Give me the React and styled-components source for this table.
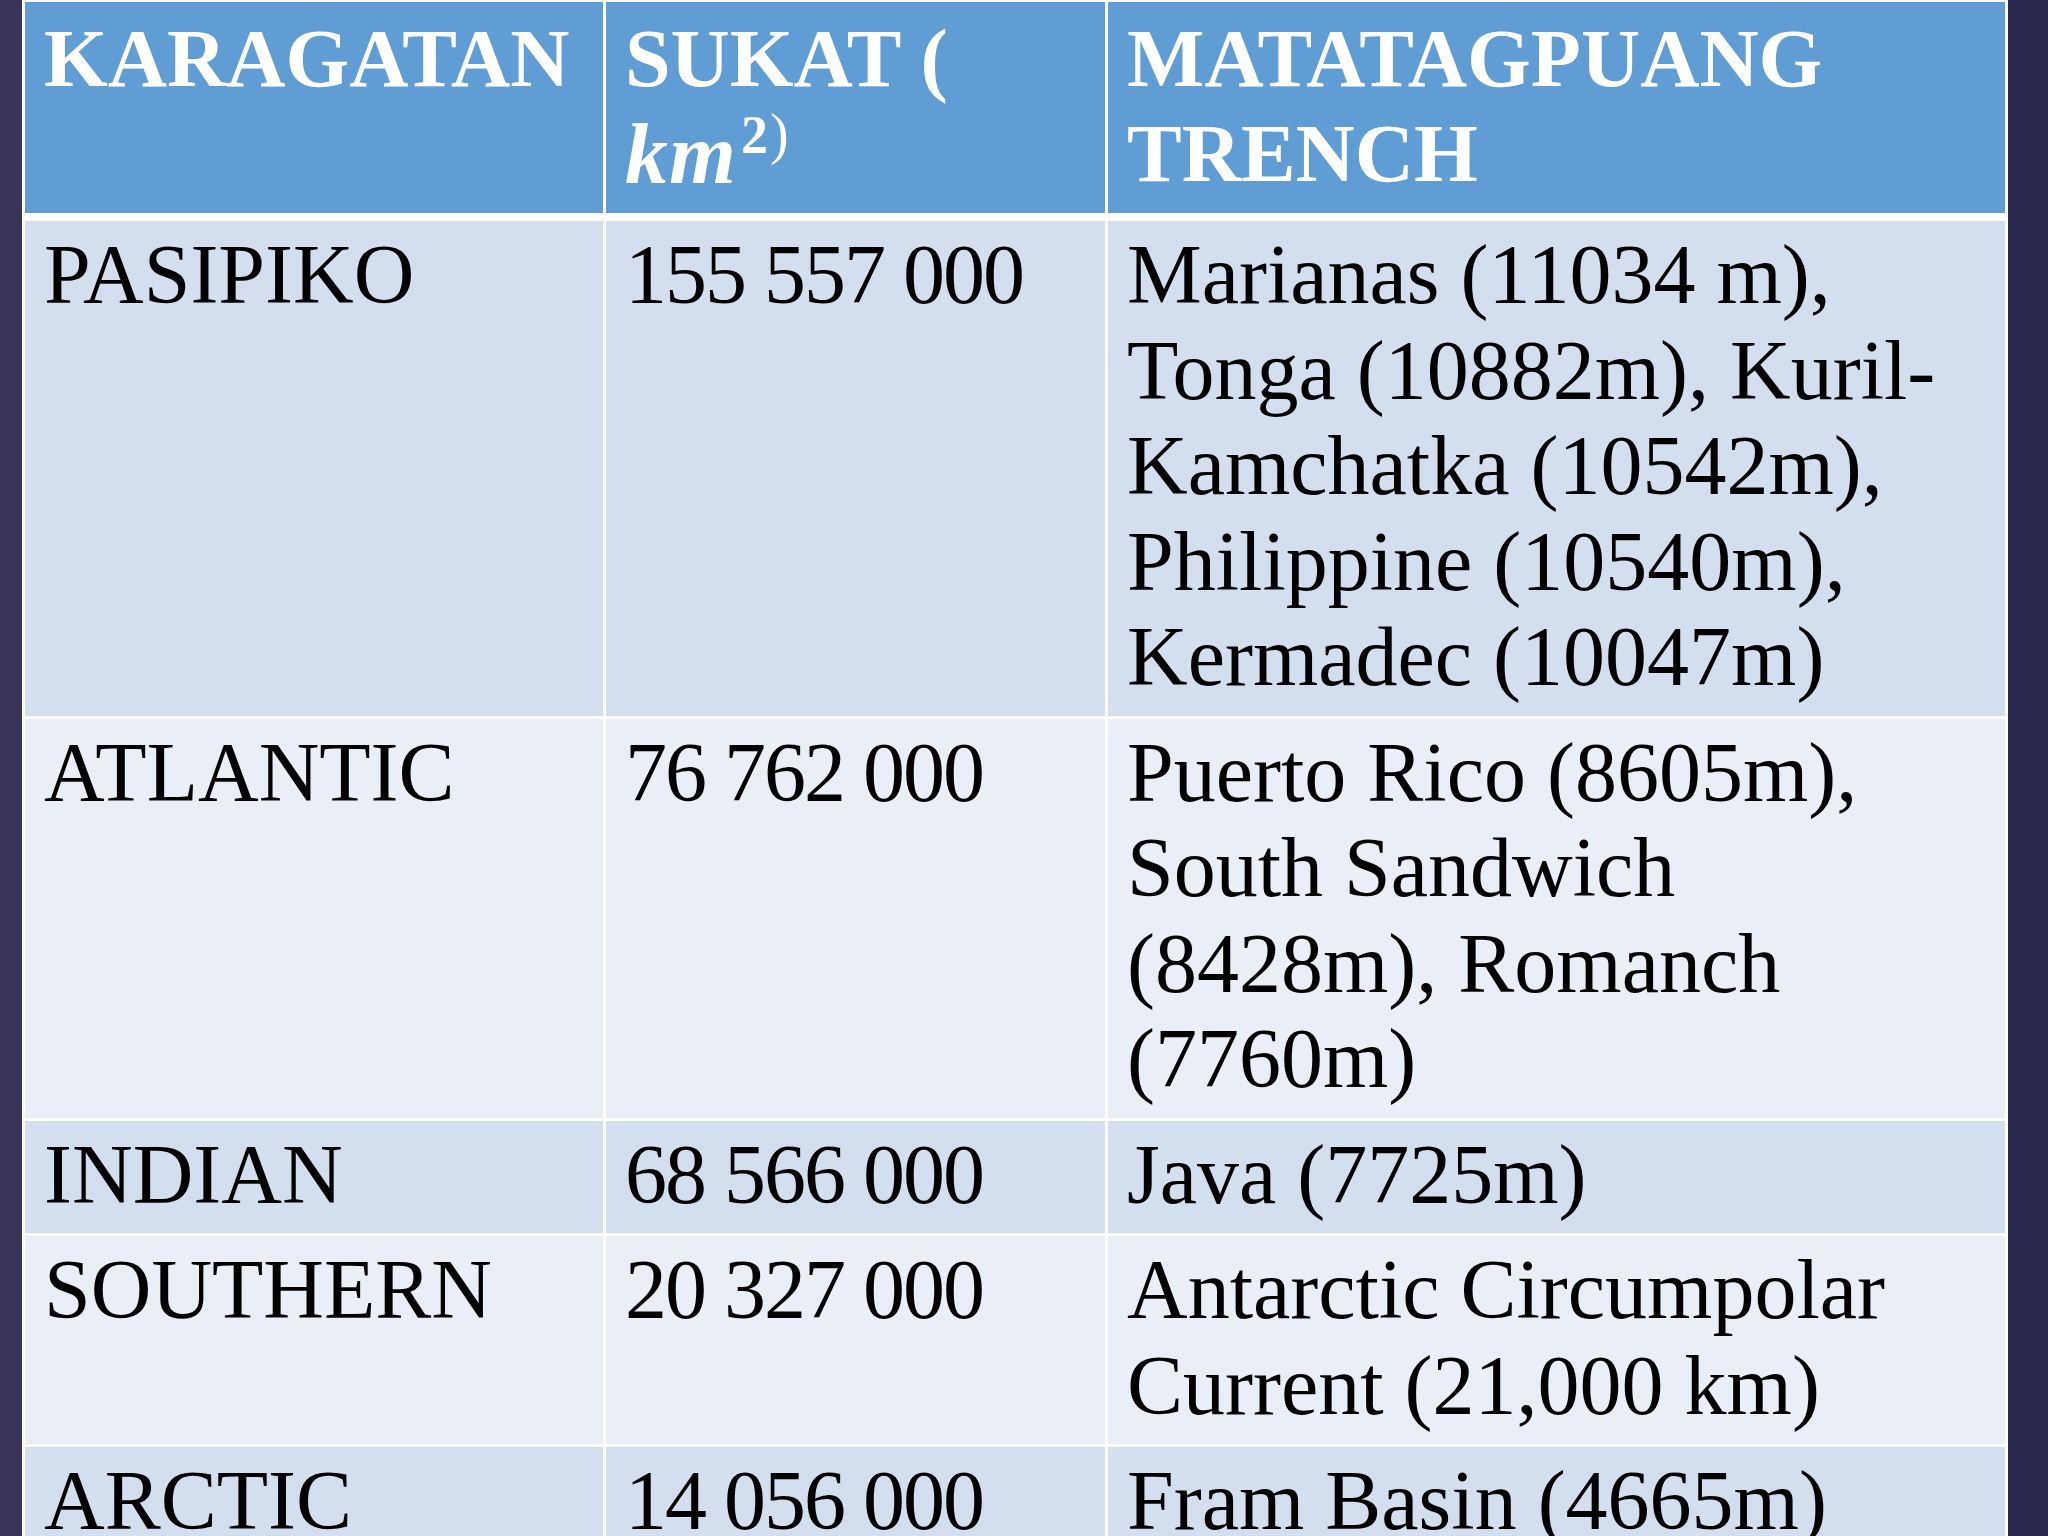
import React from "react";
import styled, { createGlobalStyle } from "styled-components";

const Global = createGlobalStyle`
  html, body {
    margin: 0;
    padding: 0;
    background: #322e55;
  }
`;

const Slide = styled.div`
  width: 2048px;
  height: 1536px;
  overflow: hidden;
  box-sizing: border-box;
  padding: 0 40px 0 22px;
  background: linear-gradient(90deg, #3a3459 0%, #302c55 50%, #2b2850 100%);
`;

const Table = styled.table`
  width: 1986px;
  border-collapse: collapse;
  table-layout: fixed;
  font-family: "Liberation Serif", "Times New Roman", serif;
`;

const Head = styled.th`
  background: #5f9dd4;
  color: #ffffff;
  font-size: 82px;
  font-weight: 700;
  line-height: 95px;
  text-align: left;
  vertical-align: top;
  white-space: nowrap;
  padding: 9px 19px 10px;
  border: 3px solid #ffffff;
  border-top-width: 2px;
  border-bottom-width: 8px;
`;

const Cell = styled.td`
  background: ${(p) => (p.$alt ? "#e9eef7" : "#d3dfee")};
  color: #000000;
  font-size: 84px;
  line-height: 95.5px;
  letter-spacing: ${(p) => (p.$tight ? "-2px" : "0")};
  vertical-align: top;
  white-space: nowrap;
  padding: 6px 19px 11px;
  border: 3px solid #ffffff;
`;

const Math = styled.span`
  font-style: italic;
  font-size: 86px;
  letter-spacing: 1px;
`;

const Sup = styled.span`
  display: inline-block;
  font-size: 54px;
  font-style: normal;
  font-weight: 700;
  line-height: 1;
  vertical-align: 30px;
  margin-left: 4px;
`;

const Paren = styled.span`
  font-weight: 400;
  font-size: 56px;
  margin-left: 2px;
`;

const rows = [
  {
    ocean: "PASIPIKO",
    area: "155 557 000",
    trenches: [
      "Marianas (11034 m),",
      "Tonga (10882m), Kuril-",
      "Kamchatka (10542m),",
      "Philippine (10540m),",
      "Kermadec (10047m)",
    ],
  },
  {
    ocean: "ATLANTIC",
    area: "76 762 000",
    trenches: [
      "Puerto Rico (8605m),",
      "South Sandwich",
      "(8428m), Romanch",
      "(7760m)",
    ],
  },
  { ocean: "INDIAN", area: "68 566 000", trenches: ["Java (7725m)"] },
  {
    ocean: "SOUTHERN",
    area: "20 327 000",
    trenches: ["Antarctic Circumpolar", "Current (21,000 km)"],
  },
  { ocean: "ARCTIC", area: "14 056 000", trenches: ["Fram Basin (4665m)"] },
];

const Lines = ({ items }) =>
  items.map((line, i) => (
    <React.Fragment key={i}>
      {i > 0 && <br />}
      {line}
    </React.Fragment>
  ));

const App = () => {
  return (
    <Slide>
      <Global />
      <Table>
        <colgroup>
          <col style={{ width: 581 }} />
          <col style={{ width: 502 }} />
          <col />
        </colgroup>
        <thead>
          <tr>
            <Head>KARAGATAN</Head>
            <Head>
              SUKAT (
              <br />
              <Math>km</Math>
              <Sup>
                2<Paren>)</Paren>
              </Sup>
            </Head>
            <Head>
              MATATAGPUANG
              <br />
              TRENCH
            </Head>
          </tr>
        </thead>
        <tbody>
          {rows.map((row, i) => (
            <tr key={row.ocean}>
              <Cell $alt={i % 2 === 1}>{row.ocean}</Cell>
              <Cell $alt={i % 2 === 1} $tight>
                {row.area}
              </Cell>
              <Cell $alt={i % 2 === 1}>
                <Lines items={row.trenches} />
              </Cell>
            </tr>
          ))}
        </tbody>
      </Table>
    </Slide>
  );
};

export default App;
